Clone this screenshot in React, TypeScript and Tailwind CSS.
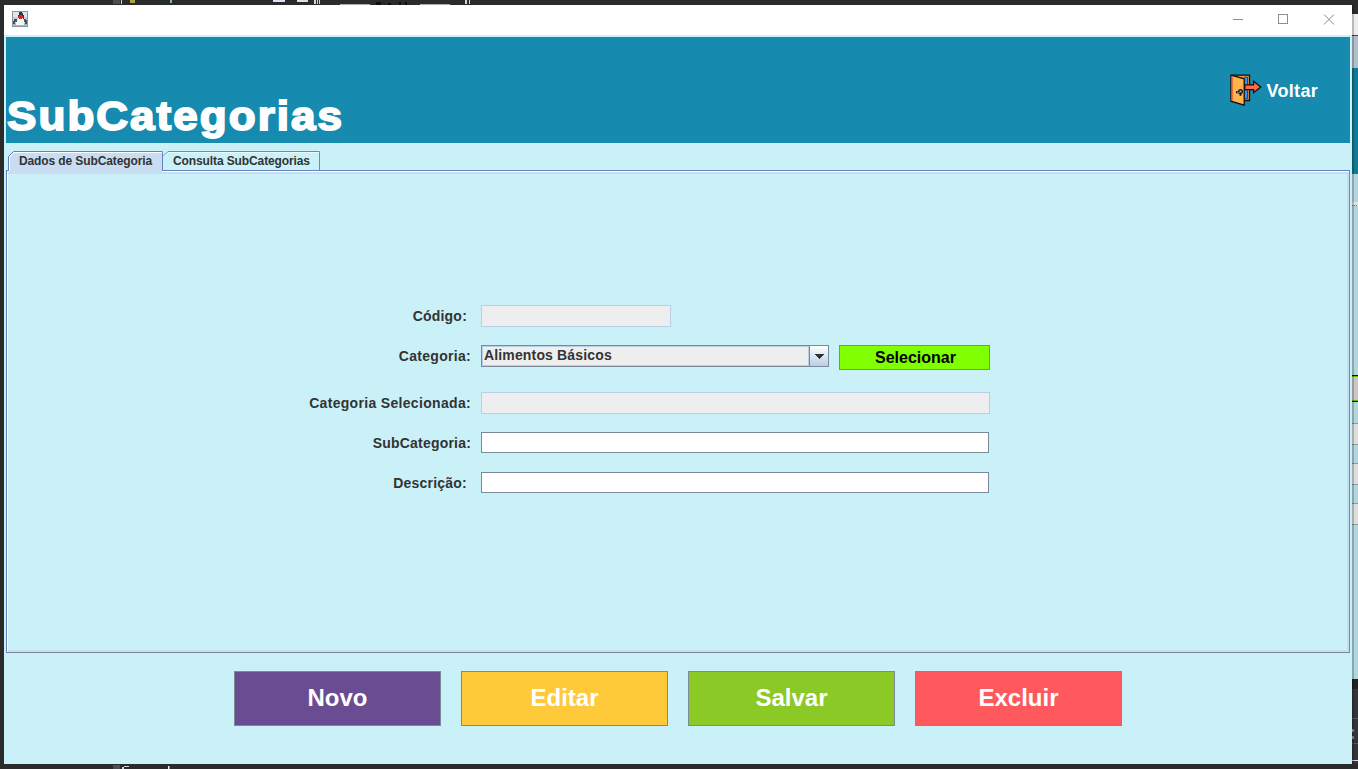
import React from 'react';

const labelText = 'text-[14px] leading-[22px] font-bold text-[#333333] whitespace-nowrap';

function DukeIcon() {
  return (
    <svg width="16" height="16" viewBox="0 0 16 16" shapeRendering="crispEdges">
      <rect x="0.5" y="0.5" width="15" height="15" fill="#dce6ee" stroke="#8797a8" />
      <rect x="1" y="6" width="14" height="5" fill="#c3d1dd" />
      <rect x="1" y="12" width="14" height="3" fill="#a9b7c3" />
      <path d="M7 1h3v1h1v2h1v4H6V4h1z" fill="#33383c" />
      <path d="M2 8h3v1h1v4H5v-2H3v2H1v-3h1zM12 8h2v1h1v4h-2v-2h-1z" fill="#4a5055" />
      <path d="M6 7h5v2h1v5H4v-3h1V9h1z" fill="#f6f7f8" />
      <path d="M7 4h3v1h1v2h-1v1H7V7H6V5h1z" fill="#e02027" />
    </svg>
  );
}

function DoorIcon() {
  return (
    <svg width="32" height="32" viewBox="0 0 32 32" strokeLinejoin="miter">
      <path d="M1.500 1.200h18v25.300h-6" fill="#e89a3c" stroke="#111" strokeWidth="1.300" />
      <path d="M13.500 3.200h4v21.500h-4z" fill="#3e8ff0" />
      <path d="M14.500 3.200h3v21.500h-3" fill="none" stroke="#14335c" strokeWidth=".8" />
      <path d="M.9 1.200 14.200 4.800v26.400L.9 27.200z" fill="#ffb44c" stroke="#111" strokeWidth="1.300" />
      <path d="M2.200 2.500v24" stroke="#e8603c" strokeWidth="1.300" />
      <path d="M14.800 10.800h8.800V7.300l7.200 5.700-7.200 5.700v-3.100h-8.800z" fill="#ff6a4d" stroke="#111" strokeWidth="1.300" />
      <circle cx="10.500" cy="17.500" r="1.900" fill="#8d99a6" stroke="#111" strokeWidth="1.200" />
      <path d="M6 18.300h3.500M10.500 19v2.800" stroke="#111" strokeWidth="1.900" />
      <path d="M7 18.300h3" stroke="#8d99a6" strokeWidth=".8" />
    </svg>
  );
}

function TitleBar() {
  return (
    <div className="h-[30px] shrink-0 bg-white flex justify-between items-start">
      <div className="pl-2 pt-[6px]"><DukeIcon /></div>
      <svg width="120" height="30" viewBox="0 0 120 30" fill="none" stroke="#8c8c8c">
        <path d="M1 14.5h10M46.5 9.5h9v9h-9z" shapeRendering="crispEdges" />
        <path d="M92 9.5l10 10M102 9.5l-10 10" />
      </svg>
    </div>
  );
}

function Header() {
  return (
    <div className="h-[106px] mx-[2px] mt-[2px] shrink-0 bg-[#178aaf] text-white flex justify-between">
      <h1 className="pl-[1px] pt-[56px] text-[40px] leading-[46px] font-bold tracking-[1.85px] origin-left scale-x-[1.1] [-webkit-text-stroke:1.8px_white] whitespace-nowrap">SubCategorias</h1>
      <button className="flex items-center gap-[5px] h-8 mt-[37px] mr-[32px] text-[18px] font-bold">
        <DoorIcon />
        <span className="tracking-[0.3px] pt-[2px]">Voltar</span>
      </button>
    </div>
  );
}

function Tabs() {
  return (
    <div className="flex mt-2 h-[19px] pl-1 shrink-0 text-[12px] leading-[20px] font-bold tracking-[-0.11px] text-[#333333]">
      <div className="relative z-10 w-[155px] h-[23px] -mb-1">
        <svg className="absolute inset-0" width="155" height="23" viewBox="0 0 155 23">
          <path d="M1 23V6L6 1h148v22z" fill="#c8ddf2" />
          <path d="M.5 19.5V5.5L5.5.5h149v19" fill="none" stroke="#6382bf" />
          <path d="M1.5 19.5V6L6 1.5h148" fill="none" stroke="#fff" />
        </svg>
        <span className="relative pl-[11px] whitespace-nowrap">Dados de SubCategoria</span>
      </div>
      <div className="relative w-[157px] h-[19px]">
        <svg className="absolute inset-0" width="157" height="19" viewBox="0 0 157 19">
          <path d="M0 5.5L5 .5h151.500V19" fill="none" stroke="#7a8a99" />
          <path d="M0 6.500L5.500 1.500H156" fill="none" stroke="#e9fbff" />
        </svg>
        <span className="relative pl-[10px] whitespace-nowrap">Consulta SubCategorias</span>
      </div>
    </div>
  );
}

interface FieldProps {
  label: string;
  spacing: string;
  children: React.ReactNode;
}

function Field({ label, spacing, children }: FieldProps) {
  return (
    <div className="flex">
      <div className={`w-[473px] shrink-0 text-right ${labelText} ${spacing}`}>{label}</div>
      {children}
    </div>
  );
}

function Form() {
  return (
    <div className="mx-[2px] h-[483px] shrink-0 border border-[#6382bf] border-r-[#7a8a99] border-b-[#7a8a99]">
      <div className="h-full border-t border-l border-white">
        <div className="h-full border-t-2 border-r-2 border-b-2 border-[#c8ddf2] pt-[131px] flex flex-col">
          <Field label="Código:" spacing="pr-[14px] tracking-[0.2px]"><div className="w-[190px] h-[22px] bg-[#eeeeee] border border-[#b8cfe5]" /></Field>
          <div className="h-[18px]" />
          <Field label="Categoria:" spacing="pr-[10px] tracking-[0.3px]">
            <div className="w-[348px] h-[22px] border border-[#7a8a99] flex bg-[#eeeeee]">
              <div className="flex-1 border border-[#b8cfe5] pl-[1px] text-[14px] leading-[16px] font-bold tracking-[0.15px] text-[#333333] whitespace-nowrap">Alimentos Básicos</div>
              <div className="w-[19px] border-l border-[#7a8a99] bg-gradient-to-b from-white to-[#b8cfe5] flex items-center justify-center">
                <svg width="10" height="5" viewBox="0 0 10 5" shapeRendering="crispEdges"><path d="M0 0h10L5 5z" fill="#333" /></svg>
              </div>
            </div>
            <button className="ml-[10px] w-[151px] h-[25px] bg-[#80ff00] border border-[#7a8a99] text-black text-[16px] leading-[23px] font-bold pl-[2px]">Selecionar</button>
          </Field>
          <div className="h-[22px]" />
          <Field label="Categoria Selecionada:" spacing="pr-[10px] tracking-[0.32px]"><div className="w-[509px] h-[22px] bg-[#eeeeee] border border-[#b8cfe5]" /></Field>
          <div className="h-[18px]" />
          <Field label="SubCategoria:" spacing="pr-[10px] tracking-[0.2px]"><div className="w-[508px] h-[21px] bg-white border border-[#7a8a99]" /></Field>
          <div className="h-[18px]" />
          <Field label="Descrição:" spacing="pr-[14px] tracking-[0.22px]"><div className="w-[508px] h-[21px] bg-white border border-[#7a8a99]" /></Field>
        </div>
      </div>
    </div>
  );
}

const actions = [
  { name: 'Novo', color: 'bg-[#6a4c93]' },
  { name: 'Editar', color: 'bg-[#ffca3a]' },
  { name: 'Salvar', color: 'bg-[#8ac926]' },
  { name: 'Excluir', color: 'bg-[#ff595e]' },
];

const desktopTop = (
  <svg width="1358" height="5" viewBox="0 0 1358 5" shapeRendering="crispEdges">
    <path d="M113 0h7v4h-7z" fill="#4b4f51" />
    <path d="M121 0h1v4h-1zM314 0h2v4h-2zM317 0h1v4h-1zM319 0h1v4h-1zM465 0h2v4h-2zM469 0h1v4h-1z" fill="#d4d4d4" />
    <path d="M130 0h5v3h-5z" fill="#a8a33b" />
    <path d="M170 0h2v3h-2z" fill="#81b6b5" />
    <path d="M273 0h12v2h-12zM297 0h11v2h-11z" fill="#d9e1f1" />
    <path d="M340 4h30v1h-30zM420 4h30v1h-30z" fill="#aaa" />
    <path d="M376 2h5v3h-5zM388 3h3v2h-3zM399 2h2v3h-2zM405 2h2v3h-2z" fill="#0d0d0d" />
  </svg>
);

export default function App() {
  return (
    <div className="w-[1358px] h-[769px] overflow-hidden bg-[#2b2b2b] flex flex-col font-['Liberation_Sans',Arial,sans-serif]">
      <div className="h-[5px] shrink-0">{desktopTop}</div>
      <div className="flex h-[759px] shrink-0">
        <div className="w-1 shrink-0 bg-[#2b2b2b]" />
        <main className="w-[1348px] bg-[#caf0f8] flex flex-col shrink-0">
          <TitleBar />
          <Header />
          <Tabs />
          <Form />
          <div className="mt-[18px] flex justify-center gap-5">
            {actions.map((a) => (
              <button key={a.name} className={`w-[207px] h-[55px] pb-[2px] border border-[#7a8a99] text-white text-[24px] leading-[51px] font-bold ${a.color}`}>{a.name}</button>
            ))}
          </div>
        </main>
        <svg width="6" height="759" viewBox="0 0 6 759" shapeRendering="crispEdges">
          <rect width="6" height="9" fill="#2b2b2b" />
          <rect y="9" width="6" height="21" fill="#ececec" />
          <rect y="30" width="6" height="1" fill="#444" />
          <rect y="31" width="6" height="32" fill="#b1bfcd" />
          <rect y="63" width="6" height="106" fill="#137993" />
          <rect y="169" width="6" height="505" fill="#b1d6de" />
          <rect y="197" width="6" height="3" fill="#e1e1e1" />
          <path d="M0 200.500h6" stroke="#777" strokeDasharray="1 1" />
          <path d="M0 370h6v1H0zM0 396h6v1H0z" fill="#111" />
          <path d="M0 371h6v1H0zM0 395h6v1H0z" fill="#61bd05" />
          <rect y="372" width="6" height="23" fill="#cac6c8" />
          <path d="M0 418h6v21H0zM0 458h6v21H0zM0 498h6v21H0z" fill="#dedede" />
          <path d="M0 418h6v1H0zM0 439h6v1H0zM0 458h6v1H0zM0 479h6v1H0zM0 498h6v1H0zM0 519h6v1H0z" fill="#8d9a9f" />
          <rect y="674" width="6" height="85" fill="#333638" />
          <rect y="674" width="6" height="10" fill="#222" />
          <path d="M0 713h6v1H0zM0 738h6v1H0z" fill="#53575a" />
          <path d="M0 724h2v3H0zM0 731h2v3H0z" fill="#999" />
          <path d="M0 755h6v1H0z" fill="#ddd" />
          <rect width="2" height="759" fill="#000" opacity=".22" />
        </svg>
      </div>
      <svg width="1358" height="5" viewBox="0 0 1358 5" shapeRendering="crispEdges">
        <path d="M113 1h7v4h-7z" fill="#4b4f51" />
        <path d="M122 3h2v2h-2zM124 2h5v1h-5z" fill="#d4d4d4" />
        <path d="M168 2h1v3h-1z" fill="#eee" />
        <path d="M169 2h1v3h-1z" fill="#4799d9" />
      </svg>
    </div>
  );
}
